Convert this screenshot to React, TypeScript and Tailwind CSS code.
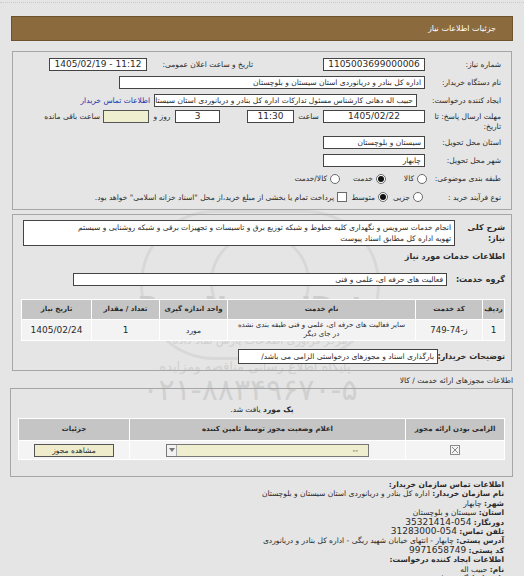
import { ReactNode } from "react";

const Box = ({ className = "", children, ltr }: { className?: string; children?: ReactNode; ltr?: boolean }) => (
  <div
    dir={ltr ? "ltr" : undefined}
    className={`h-[13px] shrink-0 bg-white border border-[#444] flex items-center px-[3px] overflow-hidden whitespace-nowrap ${
      ltr ? "text-[9px]" : ""
    } ${className}`}
  >
    {children}
  </div>
);

const Radio = ({ checked }: { checked?: boolean }) => (
  <span className="w-[10px] h-[10px] rounded-full border border-[#6a6a6a] bg-white flex items-center justify-center shrink-0">
    {checked && <span className="w-[6px] h-[6px] rounded-full bg-[#111]" />}
  </span>
);

const Label = ({ className = "", children }: { className?: string; children: ReactNode }) => (
  <div className={`shrink-0 whitespace-nowrap ${className}`}>{children}</div>
);

const Num = ({ children }: { children: ReactNode }) => (
  <span dir="ltr" className="text-[9px]">
    {children}
  </span>
);

const Watermark = () => (
  <div className="pointer-events-none absolute inset-0">
    <div className="absolute left-[140px] top-[210px] w-[240px] h-[150px] rounded-full border-[3px] border-[#d8d8d8]" />
    <div className="absolute left-[210px] top-[232px] w-[100px] h-[100px] rounded-full border-[3px] border-[#d8d8d8]" />
    <div className="absolute left-[135px] top-[293px] w-[250px] text-center text-[27px] leading-[28px] font-bold font-['DejaVu_Sans'] text-[#cdcdcd]">
      ParsNamadData
    </div>
    <div className="absolute left-[150px] top-[334px] w-[220px] text-center text-[11px] leading-[14px] text-[#d0d0d0]">
      مرکز فراوری اطلاعات پارس نماد داده
    </div>
    <div className="absolute left-[140px] top-[359px] w-[230px] text-center text-[13px] leading-[16px] text-[#d0d0d0]">
      پایگاه اطلاع رسانی مناقصه ومزایده
    </div>
    <div dir="ltr" className="absolute left-[135px] top-[374px] w-[230px] text-center text-[30px] leading-[32px] text-[#d0d0d0]">
      ۰۲۱-۸۸۳۴۹۶۷۰-۵
    </div>
  </div>
);

const headers = ["ردیف", "کد خدمت", "نام خدمت", "واحد اندازه گیری", "تعداد / مقدار", "تاریخ نیاز"];

export default function App() {
  return (
    <div
      dir="rtl"
      className="relative w-[524px] h-[576px] overflow-hidden bg-[#e5e5e5] text-[#2b2b2b] text-[7.5px] leading-[11px] font-['DejaVu_Sans',sans-serif]"
    >
      <Watermark />
      <div className="h-[3px] border-b border-dotted border-[#cacaca]" />

      <div className="mt-[13px] ml-[11px] mr-[11px] h-[25px] bg-[#8b6a3e] border border-[#6e532f] flex items-center pr-[16px] text-white text-[8px]">
        جزئیات اطلاعات نیاز
      </div>

      {/* main info */}
      <div className="relative mt-[10px] mx-[12px] border border-[#a6a6a6] pt-[3px] pr-[10px] pb-[3px]">
        <div className="h-[18px] flex items-center">
          <Label className="w-[76px]">شماره نیاز:</Label>
          <Box ltr className="w-[102px] justify-center">1105003699000006</Box>
          <div className="w-[70px]" />
          <Label className="w-[106px]">تاریخ و ساعت اعلان عمومی:</Label>
          <Box ltr className="w-[98px] justify-center">1405/02/19 - 11:12</Box>
        </div>
        <div className="h-[18px] flex items-center">
          <Label className="w-[76px]">نام دستگاه خریدار:</Label>
          <Box className="w-[306px]">اداره کل بنادر و دریانوردی استان سیستان و بلوچستان</Box>
        </div>
        <div className="h-[18px] flex items-center">
          <Label className="w-[84px]">ایجاد کننده درخواست:</Label>
          <Box className="w-[263px]">
            حبیب اله دهانی کارشناس مسئول تدارکات اداره کل بنادر و دریانوردی استان سیستان و بلوچستان
          </Box>
          <a className="mr-[4px] text-[#2233aa] whitespace-nowrap">اطلاعات تماس خریدار</a>
        </div>
        <div className="h-[24px] flex items-start pt-[1px]">
          <Label className="w-[76px] leading-[10px] pt-[2px]">
            مهلت ارسال پاسخ: تا
            <br />
            تاریخ:
          </Label>
          <Box ltr className="w-[102px] justify-center">1405/02/22</Box>
          <div className="w-[29px] h-[13px] flex items-center justify-center shrink-0">ساعت</div>
          <Box ltr className="w-[47px] justify-center">11:30</Box>
          <div className="w-[27px]" />
          <Box ltr className="w-[45px] justify-center">3</Box>
          <div className="w-[26px] h-[13px] flex items-center justify-center shrink-0">روز و</div>
          <div className="w-[46px] h-[13px] shrink-0 bg-[#efefcf] border border-[#555]" />
          <div className="h-[13px] flex items-center mr-[3px] whitespace-nowrap">ساعت باقی مانده</div>
        </div>
        <div className="h-[18px] flex items-center">
          <Label className="w-[76px]">استان محل تحویل:</Label>
          <Box className="w-[102px]">سیستان و بلوچستان</Box>
        </div>
        <div className="h-[18px] flex items-center">
          <Label className="w-[76px]">شهر محل تحویل:</Label>
          <Box className="w-[102px]">چابهار</Box>
        </div>
        <div className="h-[19px] flex items-center">
          <Label className="w-[74px]">طبقه بندی موضوعی:</Label>
          <Radio />
          <span className="mr-[3px] w-[28px]">کالا</span>
          <Radio checked />
          <span className="mr-[3px] w-[33px]">خدمت</span>
          <Radio />
          <span className="mr-[3px]">کالا/خدمت</span>
        </div>
        <div className="h-[18px] flex items-center">
          <Label className="w-[78px]">نوع فرآیند خرید :</Label>
          <Radio />
          <span className="mr-[3px] w-[22px]">جزیی</span>
          <Radio checked />
          <span className="mr-[3px] w-[28px]">متوسط</span>
          <span className="w-[10px] h-[10px] bg-white border border-[#6a6a6a] shrink-0" />
          <span className="mr-[3px] whitespace-nowrap">
            پرداخت تمام یا بخشی از مبلغ خرید،از محل "اسناد خزانه اسلامی" خواهد بود.
          </span>
        </div>
      </div>

      {/* services */}
      <div className="relative mt-[4px] mx-[12px] border border-[#a6a6a6] pt-[5px] pr-[6px] pl-[9px] pb-[6px]">
        <div className="flex items-start">
          <Label className="w-[50px] font-bold text-[8px] leading-[11px] pt-[2px]">
            شرح کلی
            <br />
            نیاز:
          </Label>
          <div className="w-[432px] h-[26px] bg-white border border-[#444] px-[3px] pt-[1px] leading-[11px] whitespace-nowrap overflow-hidden">
            <div>انجام خدمات سرویس و نگهداری کلیه خطوط و شبکه توزیع برق و تاسیسات و تجهیزات برقی و شبکه روشنایی و سیستم</div>
            <div>تهویه اداره کل مطابق اسناد پیوست</div>
          </div>
        </div>
        <div className="mt-[5px] font-bold text-[8px] leading-[12px]">اطلاعات خدمات مورد نیاز</div>
        <div className="mt-[10px] flex items-center">
          <Label className="w-[58px] font-bold text-[8px]">گروه خدمت:</Label>
          <Box className="w-[374px]">فعالیت های حرفه ای، علمی و فنی</Box>
        </div>
        <div className="mt-[13px] w-[484px] bg-white p-px grid grid-cols-[21px_66px_187px_67px_67px_69px] gap-px">
          {headers.map((h) => (
            <div
              key={h}
              className="h-[19px] bg-[#c5c5c5] font-bold text-[7px] flex items-center justify-center whitespace-nowrap overflow-hidden"
            >
              {h}
            </div>
          ))}
          <div className="h-[20px] bg-[#f3f3f3] flex items-center justify-center">
            <Num>1</Num>
          </div>
          <div className="h-[20px] bg-[#f3f3f3] flex items-center justify-center">
            <span dir="ltr" className="text-[8.5px]">
              749-74-ز
            </span>
          </div>
          <div className="h-[20px] bg-[#f3f3f3] flex flex-col items-center justify-center text-[7px] leading-[9px] whitespace-nowrap overflow-hidden">
            <div>سایر فعالیت های حرفه ای، علمی و فنی طبقه بندی نشده</div>
            <div>در جای دیگر</div>
          </div>
          <div className="h-[20px] bg-[#f3f3f3] flex items-center justify-center">مورد</div>
          <div className="h-[20px] bg-[#f3f3f3] flex items-center justify-center">
            <Num>1</Num>
          </div>
          <div className="h-[20px] bg-[#f3f3f3] flex items-center justify-center">
            <Num>1405/02/24</Num>
          </div>
        </div>
        <div className="mt-[8px] flex items-center">
          <Label className="w-[67px] font-bold text-[8px]">توضیحات خریدار:</Label>
          <Box className="w-[200px] h-[15px]">بارگذاری اسناد و مجوزهای درخواستی الزامی می باشد/</Box>
        </div>
      </div>

      <div className="mt-[4px] pr-[11px] leading-[11px]">اطلاعات مجوزهای ارائه خدمت / کالا</div>

      {/* permits */}
      <div className="relative mt-[2px] ml-[10px] mr-[11px] h-[89px] border border-[#a6a6a6] pr-[7px] pl-[8px]">
        <div className="mt-[15px] text-center leading-[11px]">
          <span className="font-bold">یک مورد</span> یافت شد.
        </div>
        <div className="mt-[3px] w-[487px] bg-white p-px grid grid-cols-[98px_275px_110px] gap-px">
          <div className="h-[21px] bg-[#c5c5c5] font-bold text-[7px] flex items-center justify-center">الزامی بودن ارائه مجوز</div>
          <div className="h-[21px] bg-[#c5c5c5] font-bold text-[7px] flex items-center justify-center">
            اعلام وضعیت مجوز توسط تامین کننده
          </div>
          <div className="h-[21px] bg-[#c5c5c5] font-bold text-[7px] flex items-center justify-center">جزئیات</div>
          <div className="h-[18px] bg-[#f4f4f4] flex items-center justify-center">
            <svg width="10" height="10" viewBox="0 0 10 10">
              <rect x="0.5" y="0.5" width="9" height="9" fill="#f4f4f4" stroke="#8a8a8a" />
              <path d="M2 2 L8 8 M8 2 L2 8" stroke="#8a8a8a" strokeWidth="1" />
            </svg>
          </div>
          <div className="h-[18px] bg-[#f4f4f4] flex items-center justify-center">
            <div className="w-[203px] h-[13px] bg-[#efefcf] border border-[#777] flex items-center justify-between pr-[10px]">
              <span>--</span>
              <span className="w-[10px] h-[11px] bg-[#f2f2f2] border-r border-[#aaa] flex items-center justify-center">
                <svg width="6" height="4" viewBox="0 0 6 4">
                  <path d="M0 0 L6 0 L3 4 Z" fill="#777" />
                </svg>
              </span>
            </div>
          </div>
          <div className="h-[18px] bg-[#f4f4f4] flex items-center justify-center">
            <div className="w-[80px] h-[13px] bg-[#eeeccb] border border-[#555] flex items-center justify-center">
              مشاهده مجوز
            </div>
          </div>
        </div>
      </div>

      {/* contact */}
      <div className="mt-[3px] pr-[20px] leading-[9.4px]">
        <div className="font-bold">اطلاعات تماس سازمان خریدار:</div>
        <div>
          <b>نام سازمان خریدار:</b> اداره کل بنادر و دریانوردی استان سیستان و بلوچستان
        </div>
        <div>
          <b>شهر:</b> چابهار
        </div>
        <div>
          <b>استان:</b> سیستان و بلوچستان
        </div>
        <div>
          <b>دورنگار:</b> <Num>35321414-054</Num>
        </div>
        <div>
          <b>تلفن تماس:</b> <Num>31283000-054</Num>
        </div>
        <div>
          <b>آدرس پستی:</b> چابهار - انتهای خیابان شهید ریگی - اداره کل بنادر و دریانوردی
        </div>
        <div>
          <b>کد پستی:</b> <Num>9971658749</Num>
        </div>
        <div className="font-bold">اطلاعات ایجاد کننده درخواست:</div>
        <div>
          <b>نام:</b> حبیب اله
        </div>
        <div>
          <b>نام خانوادگی:</b> دهانی
        </div>
      </div>
    </div>
  );
}
